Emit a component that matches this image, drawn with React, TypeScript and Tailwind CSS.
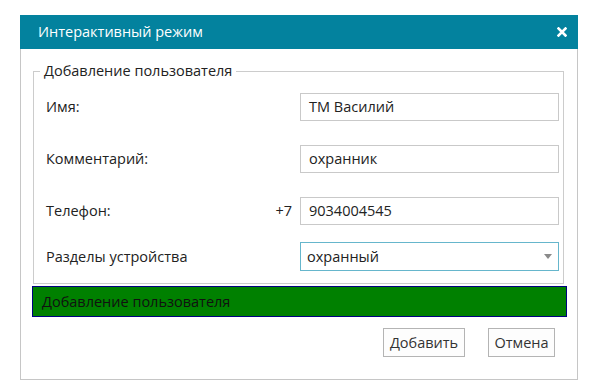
import React from "react";

export default function App() {
  const font = { fontFamily: '"Open Sans", "Noto Sans", sans-serif' };
  return (
    <div className="w-[600px] h-[389px] bg-white pt-[15px] pl-[20px]" style={font}>
      <div className="w-[558px] h-[365px] border border-[#c6c6c6] bg-white flex flex-col">
        <div className="h-[34px] -mx-px -mt-px bg-[#03829e] flex items-center justify-between pl-[18px] pr-[11px]">
          <span className="text-white text-[14.5px] leading-none">Интерактивный режим</span>
          <svg width="10" height="10" viewBox="0 0 10 10">
            <path d="M1.5 1.5 L8.5 8.5 M8.5 1.5 L1.5 8.5" stroke="white" strokeWidth="2.6" strokeLinecap="square" />
          </svg>
        </div>
        <div className="pl-[12px] pr-[13px] pt-[12px]">
          <fieldset className="border border-[#cccccc] pl-[12px] pr-[4px] pb-[11px] pt-[12px] h-[223px]">
            <legend className="-ml-[6px] px-[4px] text-[14.5px] leading-[20px] text-[#222]">Добавление пользователя</legend>
            <div className="flex flex-col">
              <Row label="Имя:" value="ТМ Василий" />
              <div className="h-[24px]" />
              <Row label="Комментарий:" value="охранник" />
              <div className="h-[24px]" />
              <Row label="Телефон:" value="9034004545" prefix="+7" />
              <div className="h-[17px]" />
              <div className="flex items-center h-[29px]">
                <span className="w-[254px] text-[14.5px] text-[#222]">Разделы устройства</span>
                <div className="w-[259px] h-[29px] border border-[#66b6cc] flex items-center justify-between pl-[6px] pr-[6px]">
                  <span className="text-[14.5px] text-[#222]">охранный</span>
                  <svg width="8" height="5" viewBox="0 0 8 5">
                    <path d="M0 0 L8 0 L4 5 Z" fill="#8a8a8a" />
                  </svg>
                </div>
              </div>
            </div>
          </fieldset>
          <div className="mt-[2px] -ml-px w-[535px] h-[31px] bg-[#008000] border border-[#000080] flex items-center pl-[9px]">
            <span className="text-[14.5px] text-[#111]">Добавление пользователя</span>
          </div>
          <div className="flex justify-end gap-[23px] mt-[11px] pr-[9px]">
            <button className="h-[29px] w-[82px] border border-[#b4b4b4] bg-[#fdfdfd] text-[14.5px] text-[#333]">Добавить</button>
            <button className="h-[29px] w-[67px] border border-[#b4b4b4] bg-[#fdfdfd] text-[14.5px] text-[#333]">Отмена</button>
          </div>
        </div>
      </div>
    </div>
  );
}

function Row({ label, value, prefix }: { label: string; value: string; prefix?: string }) {
  return (
    <div className="flex items-center h-[28px]">
      <div className="w-[254px] flex items-center justify-between pr-[8px]">
        <span className="text-[14.5px] text-[#222]">{label}</span>
        {prefix ? <span className="text-[14.5px] text-[#222]">{prefix}</span> : null}
      </div>
      <div className="w-[259px] h-[28px] border border-[#c9c9c9] flex items-center pl-[8px]">
        <span className="text-[14.5px] text-[#222]">{value}</span>
      </div>
    </div>
  );
}
